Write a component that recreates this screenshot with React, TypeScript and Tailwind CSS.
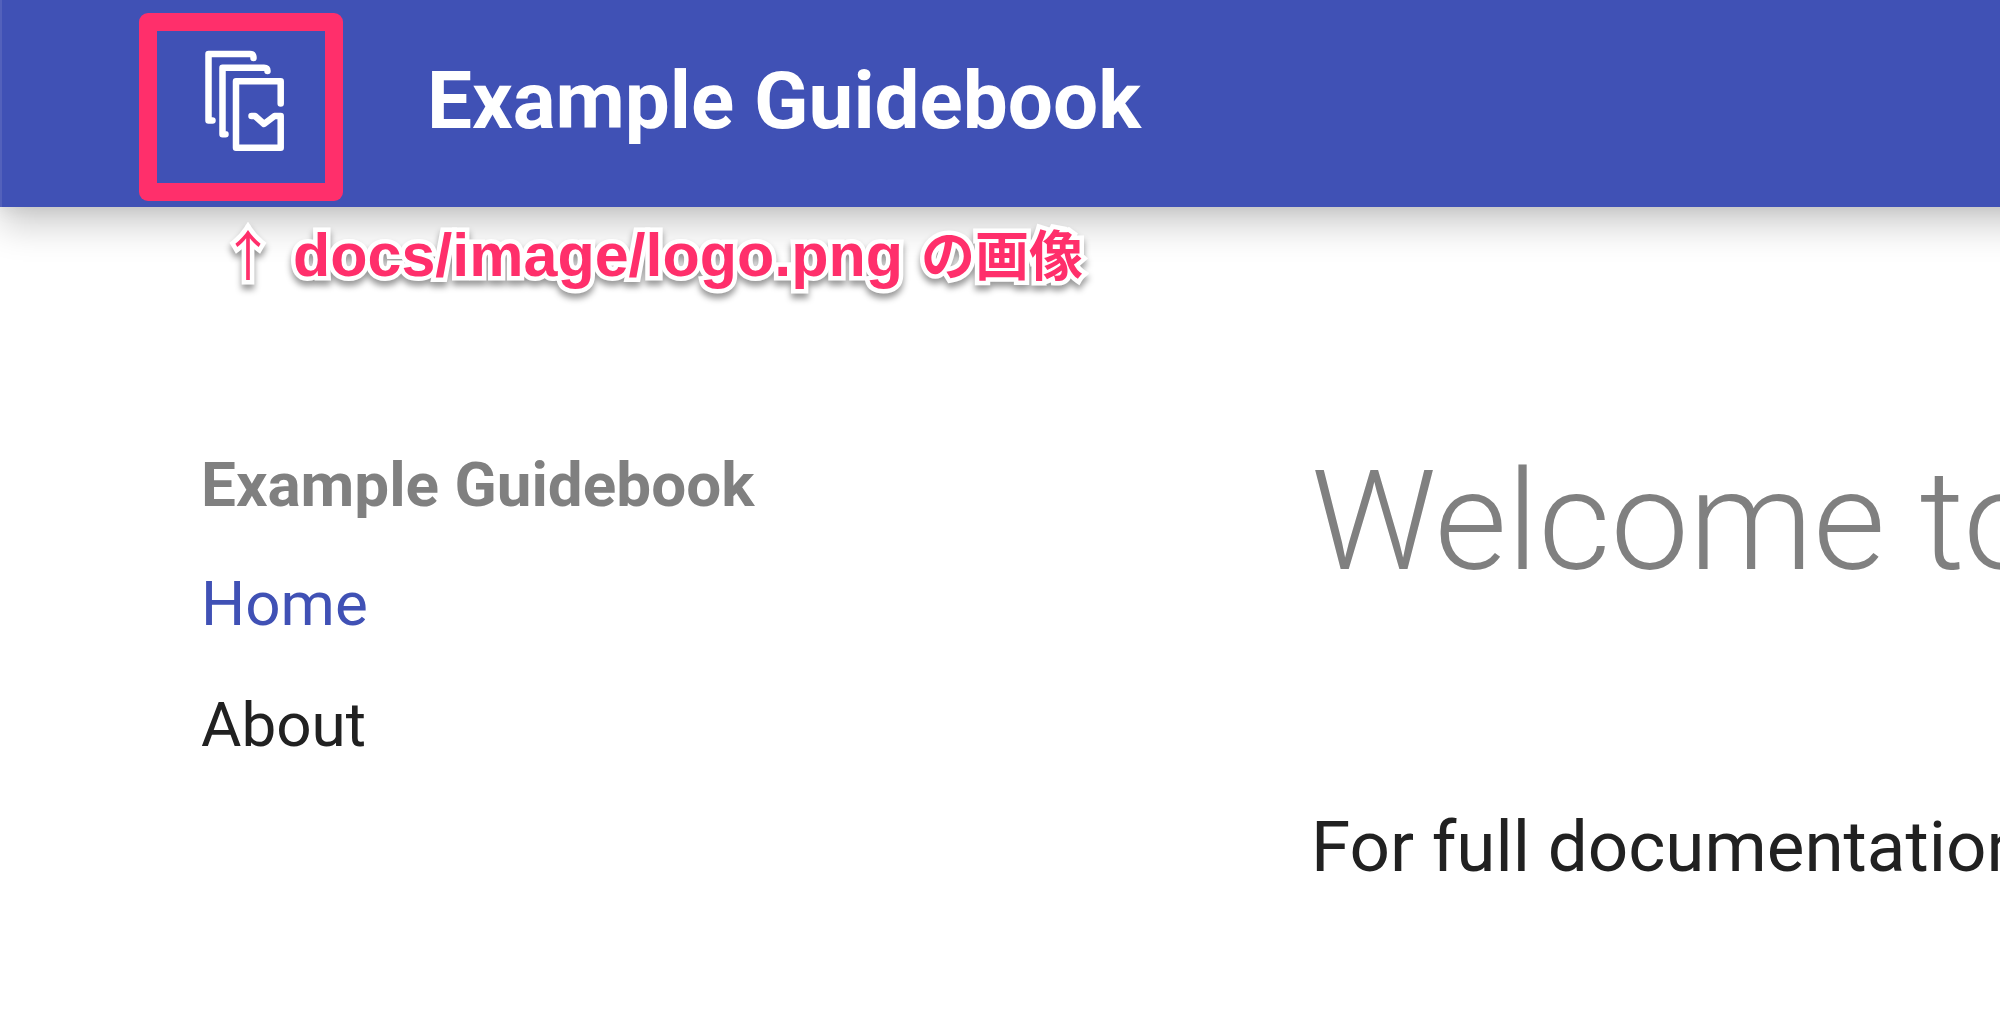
const navItems = [
  { label: "Home", href: "#home", tone: "text-[#4051b5]" },
  { label: "About", href: "#about", tone: "text-[#212121]" },
];

function StackedPagesLogo() {
  return (
    <svg
      viewBox="204 50 82 102"
      className="h-[102px] w-[82px]"
      fill="none"
      stroke="#fff"
      strokeWidth="6.5"
      strokeLinecap="round"
      strokeLinejoin="round"
      aria-hidden="true"
    >
      <path d="M212.5 120.5H208.5V54H250Q253.5 54 253.5 58" />
      <path d="M225.5 134.3H222.5V67.7H264Q267.5 67.7 267.5 71" />
      <path d="M280.7 103.5V81.2H236V147.7H280.7V116H274.5L264 124L255 116H251.5" />
    </svg>
  );
}

function Header() {
  return (
    <header className="-mr-16 flex h-[207px] items-start gap-[84px] border-l-2 border-[#5361bb] bg-[#4051b5] pt-[13px] pl-[137px] text-white shadow-[0_0_18px_rgba(0,0,0,0.1),0_18px_35px_rgba(0,0,0,0.2)]">
      <a
        href="#home"
        aria-label="Example Guidebook"
        className="rounded-[9px] bg-[#ff2f6b] p-[18px]"
      >
        <span className="flex h-[152px] w-[168px] items-start bg-[#4051b5] pt-[19px] pl-[47px]">
          <StackedPagesLogo />
        </span>
      </a>
      <span className="pt-[40px] text-[80px] leading-[96px] font-bold whitespace-nowrap">
        Example Guidebook
      </span>
    </header>
  );
}

function Annotation() {
  return (
    <p className="relative flex h-[96px] items-baseline gap-[18px] pt-[6px] pl-[221px] font-['Liberation_Sans','Noto_Sans_CJK_JP',sans-serif] text-[61px] leading-[80px] font-bold whitespace-nowrap text-[#ff2f6b] drop-shadow-[0_5px_3px_rgba(0,0,0,0.4)] [-webkit-text-stroke:9px_white] [paint-order:stroke_fill]">
      <span className="font-['Noto_Sans_CJK_JP',sans-serif] text-[54px] font-normal">↑</span>
      <span>docs/image/logo.png</span>
      <span className="font-['Noto_Sans_CJK_JP',sans-serif] text-[54px]">の画像</span>
    </p>
  );
}

export default function App() {
  return (
    <div className="min-h-screen overflow-hidden bg-white font-[Roboto,sans-serif]">
      <Header />
      <Annotation />
      <div className="flex pt-[142px] pl-[201px]">
        <nav aria-label="Example Guidebook" className="w-[1110px] shrink-0 text-[62px] leading-[72px]">
          <h2 className="pt-1 font-bold text-[#808080]">Example Guidebook</h2>
          <ul className="flex flex-col gap-[49px] pt-[47px]">
            {navItems.map((item) => (
              <li key={item.label}>
                <a href={item.href} className={item.tone}>
                  {item.label}
                </a>
              </li>
            ))}
          </ul>
        </nav>
        <main className="whitespace-nowrap">
          <h1 className="text-[140px] leading-[152px] font-light text-[#808080]">Welcome to</h1>
          <p className="pt-[194px] text-[71px] leading-[112px] text-[#212121]">
            For full documentation
          </p>
        </main>
      </div>
    </div>
  );
}
